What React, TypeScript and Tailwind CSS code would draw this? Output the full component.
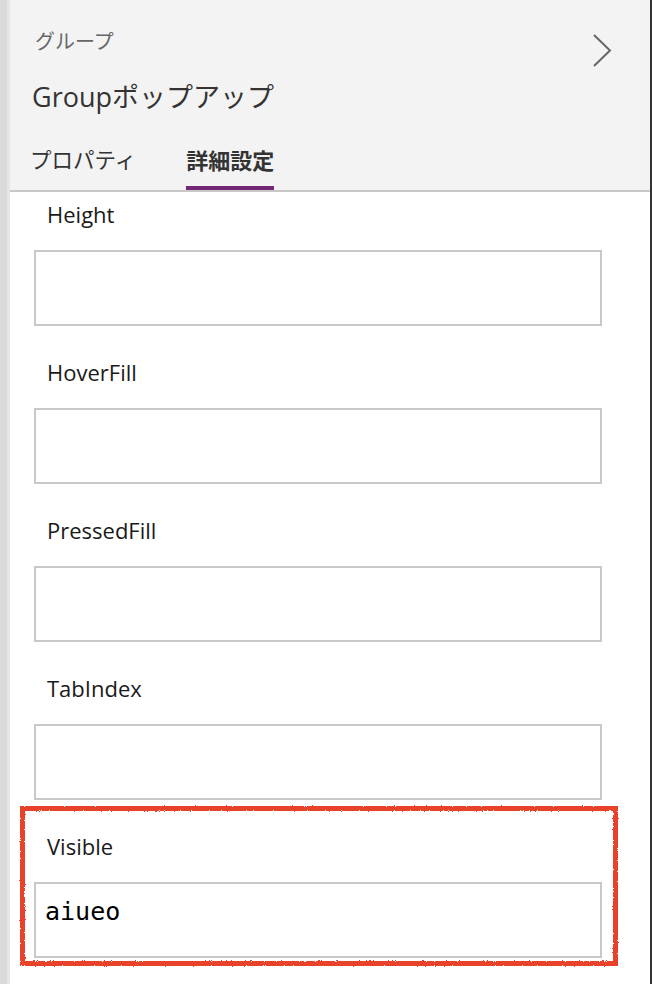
import * as React from 'react'

const FIELDS: { label: string; value?: string; marked?: boolean }[] = [
  { label: 'Height' },
  { label: 'HoverFill' },
  { label: 'PressedFill' },
  { label: 'TabIndex' },
  { label: 'Visible', value: 'aiueo', marked: true },
]

const SANS = 'font-["Open_Sans","Noto_Sans_CJK_JP",sans-serif]'

function Field({ label, value, marked }: { label: string; value?: string; marked?: boolean }) {
  return (
    <div className="relative mb-[30px] w-[568px]">
      {marked ? (
        <div className="pointer-events-none absolute -top-[24px] -bottom-[8px] -left-[14px] -right-[16px] border-[5px] border-[#e8432a] [filter:url(#rough)]" />
      ) : null}
      <div className="mb-[20px] pl-[13px] text-[22px] leading-[32px] text-[#1a1a1a]">{label}</div>
      <div className="flex h-[76px] w-[568px] items-start border-2 border-[#c8c8c8] bg-white px-[9px] pt-[13px]">
        {value ? (
          <span className='font-["DejaVu_Sans_Mono",monospace] text-[25px] leading-[30px] text-black'>
            {value}
          </span>
        ) : null}
      </div>
    </div>
  )
}

export default function App() {
  return (
    <div className={'flex h-[984px] w-[652px] overflow-hidden bg-white ' + SANS}>
      <svg width="0" height="0" className="absolute">
        <filter id="rough">
          <feTurbulence type="fractalNoise" baseFrequency="0.9" numOctaves="2" result="n" />
          <feDisplacementMap in="SourceGraphic" in2="n" scale="2.5" />
        </filter>
      </svg>

      <div className="flex w-[10px] shrink-0">
        <div className="w-[7px] bg-[#dadada]" />
        <div className="w-[3px] bg-[#e6e6e6]" />
      </div>

      <div className="flex min-w-0 flex-1 flex-col">
        <header className="h-[192px] shrink-0 border-b-2 border-[#c8c8c8] bg-[#f3f3f3]">
          <div className="flex items-start justify-between">
            <div>
              <div className="mt-[28px] pl-[25px] text-[20px] leading-[28px] text-[#666]">グループ</div>
              <div className="mt-[23px] pl-[22px] text-[27px] leading-[36px] text-[#333]">Groupポップアップ</div>
            </div>
            <svg className="mr-[38px] mt-[34px]" width="19" height="33" viewBox="0 0 19 33" fill="none">
              <path d="M1 1 L17 16.5 L1 32" stroke="#666" strokeWidth="2" />
            </svg>
          </div>

          <div className="mt-[30px] flex items-start gap-[50px] pl-[20px]">
            <div className="h-[45px] text-[21.5px] leading-[30px] text-[#333]">プロパティ</div>
            <div className="flex h-[45px] flex-col">
              <div className="text-[22px] font-semibold leading-[30px] text-[#333]">詳細設定</div>
              <div className="mt-auto h-[4px] bg-[#742774]" />
            </div>
          </div>
        </header>

        <main className="flex-1 pl-[24px] pt-[6px]">
          {FIELDS.map((f) => (
            <Field key={f.label} {...f} />
          ))}
        </main>
      </div>

      <div className="w-[2px] shrink-0 bg-[#333]" />
    </div>
  )
}
